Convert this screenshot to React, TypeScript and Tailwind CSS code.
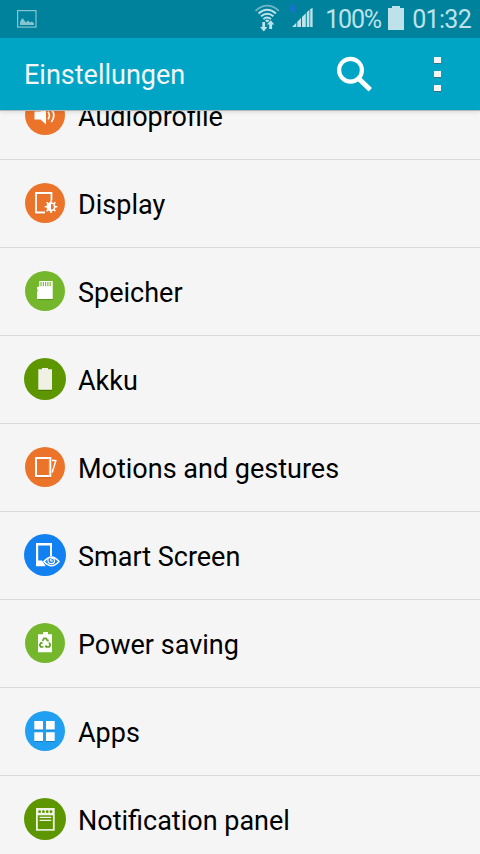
import type { ReactNode } from 'react';

type Setting = {
  label: string;
  color: string;
  radius: number;
  icon: ReactNode;
};

// Glyphs are drawn on a 42x42 box, centred on 21,21
const settings: Setting[] = [
  {
    label: 'Audioprofile',
    color: '#eb742a',
    radius: 20,
    icon: (
      <>
        <path d="M10.5 17.5h6l5.5-5v18l-5.5-5h-6z" fill="#fff" />
        <path d="M24 17.7q2.8 3.7 0 7.6M27.3 15q5 6.3 0 13" fill="none" stroke="#fff" strokeWidth="1.7" />
      </>
    ),
  },
  {
    label: 'Display',
    color: '#eb742a',
    radius: 20,
    icon: (
      <>
        <path d="M21 31.4h-9.1V11.4h15.8V19" fill="none" stroke="#b9602a" strokeOpacity=".6" strokeWidth="1.5" />
        <path d="M21 30.5h-9V11h15.5v7.5" fill="none" stroke="#fff" strokeWidth="1.8" />
        <circle cx="27" cy="24.7" r="3.7" fill="none" stroke="#fff" strokeWidth="1.6" />
        <path d="M27 20.6a4.1 4.1 0 0 0 0 8.2z" fill="#fff" />
        <path
          d="M27 20.8v-2.4M27 28.6V31M23.1 24.7h-2.4M30.9 24.7h2.4M24.2 21.9l-1.6-1.6M29.8 21.9l1.6-1.6M24.2 27.5l-1.6 1.6M29.8 27.5l1.6 1.6"
          stroke="#fff"
          strokeWidth="1.6"
        />
      </>
    ),
  },
  {
    label: 'Speicher',
    color: '#75b72c',
    radius: 20,
    icon: (
      <>
        <path d="M14 29.5h15" stroke="#5a9520" />
        <path d="M15.3 11H28.7v18H13v-7.5l1.2-.7-1.2-1.3v-2.3l2.3-1z" fill="#fff" />
        <path d="M17 12v4.3M19.3 12v4.3M21.6 12v4.3M23.9 12v4.3M26.2 12v4.3" stroke="#75b72c" strokeWidth="1.1" />
      </>
    ),
  },
  {
    label: 'Akku',
    color: '#5e9600',
    radius: 21,
    icon: (
      <>
        <path d="M14.3 32.2H28" stroke="#437000" />
        <path d="M18 10h6v1.3h4v20.4H14.3V11.3H18z" fill="#f0f1e4" />
      </>
    ),
  },
  {
    label: 'Motions and gestures',
    color: '#eb742a',
    radius: 20,
    icon: (
      <>
        <path d="M11 31.7h16.3" stroke="#b9602a" strokeOpacity=".7" />
        <rect x="12" y="12" width="14.3" height="18" fill="none" stroke="#fff" strokeWidth="2" />
        <path d="M25.3 12.5v18" stroke="#f6c19f" strokeWidth=".8" />
        <path d="M28 14.2l3.8.5-3.6 11.8" fill="none" stroke="#fff" strokeWidth="1.5" />
      </>
    ),
  },
  {
    label: 'Smart Screen',
    color: '#1180f0',
    radius: 21,
    icon: (
      <>
        <path d="M12 9h16v13h-2V11.4H14.2V26.5H18l1.5 2.2 2.3 3.6H12z" fill="#fff" />
        <path d="M20 27.5q7.5-8.8 15 0q-7.5 8.4-15 0z" fill="#1180f0" stroke="#fff" strokeWidth="1.6" />
        <path d="M24.1 25.1q-.9 4.8 3.4 4.6q3.2-.3 3-3.2q-.6-2.6-3.2-1.8q-1.5 1.1-.2 2.3q1 .4 1.5-.6" fill="none" stroke="#fff" strokeWidth="1.2" />
      </>
    ),
  },
  {
    label: 'Power saving',
    color: '#75b72c',
    radius: 20,
    icon: (
      <>
        <path d="M19 10h5v2.3h4v18H14v-18h5z" fill="#fff" />
        <path
          d="M18.5 19l1.5-2.6h2.1l1.5 2.4M25.1 20.5l1.2 2.4-1.1 1.9H22M19.4 24.8h-2.7l-1-1.8 1.6-2.6"
          fill="none"
          stroke="#69a52b"
          strokeWidth="1.8"
        />
        <path d="M24.7 17.2v2.5l-2.6-.8zM22.6 22.6v4l-2-2zM15.8 20.6l2.5-.9.5 2.5z" fill="#69a52b" />
      </>
    ),
  },
  {
    label: 'Apps',
    color: '#219ff0',
    radius: 20,
    icon: (
      <>
        <path d="M10.5 20h8.7M22.2 20h8.7M10.5 31.4h8.7M22.2 31.4h8.7" stroke="#167abc" />
        <path d="M10.3 11H19v8.6h-8.7zM22 11h8.7v8.6H22zM10.3 22.3H19V31h-8.7zM22 22.3h8.7V31H22z" fill="#fff" />
      </>
    ),
  },
  {
    label: 'Notification panel',
    color: '#5e9600',
    radius: 21,
    icon: (
      <>
        <rect x="12" y="10" width="18.7" height="22.7" fill="#f0f4e6" />
        <path d="M13.8 17.3h15.1v13.8H13.8z" fill="#5e9600" />
        <path d="M15.6 19.3h11.6M15.6 22.3h11.6" stroke="#f0f4e6" strokeWidth="1.2" />
        <g fill="#5e9600">
          <circle cx="15.6" cy="13.7" r="1.4" />
          <circle cx="19.4" cy="13.7" r="1.4" />
          <circle cx="23.2" cy="13.7" r="1.4" />
          <circle cx="27" cy="13.7" r="1.4" />
        </g>
      </>
    ),
  },
];

const StatusBar = () => (
  <div className="flex h-[38px] shrink-0 items-start bg-[#00829c] pl-[17px] pr-[9px] text-[#bde2ea]">
    {/* Screenshot notification */}
    <svg className="mt-[10px] h-[18px] w-5" viewBox="0 0 20 18">
      <rect x=".6" y=".6" width="18.4" height="16.5" fill="none" stroke="#85c5d1" strokeWidth="1.2" />
      <path d="M3 15v-3l2-3.5h1l2 3 1 1 2-2 2 2 2-1 2 2V15z" fill="#85c5d1" />
    </svg>
    <div className="flex-1" />

    {/* Wi-Fi with traffic arrows */}
    <svg className="mt-1 h-7 w-[26px]" viewBox="0 0 26 28">
      <g fill="none" stroke="currentColor">
        <path d="M1.5 6.8q11.8-10.2 23.4 0" stroke="#73b6c5" strokeWidth="1.7" />
        <path d="M4.5 9.4q8.8-7.4 17.4 0" strokeWidth="2" />
        <path d="M7 12.3q6.3-5 12.4 0" strokeWidth="2" />
        <path d="M9.4 15q3.8-3 7.6 0" strokeWidth="2" />
      </g>
      <path d="M13.2 18.4l-2.2-2q2.2-1.8 4.4 0z" fill="currentColor" />
      <path d="M8.3 18h2.8v5h2.3L9.8 27.4 6 23h2.3zM15.2 25v-4.6h-2.3l3.8-4.2 3.7 4.2h-2.3V25z" fill="currentColor" />
    </svg>

    {/* Roaming signal */}
    <svg className="ml-[9px] mt-1 h-6 w-[26px]" viewBox="0 0 26 24">
      <path d="M2.5 9V2h3.2v3H2.5M4.2 5.2l2 3.5M0 2.2h2.5M0 5.2h2.5" fill="none" stroke="#1e6fd8" strokeWidth="1.3" />
      <path
        d="M3 23l4.3-4.3V23zM8.3 17.7l3.7-3.7v9H8.3zM13 13l3.8-3.8V23H13zM17.8 8.3l2.6-2.6V23h-2.6zM21.2 5l2.4-1V23h-2.4z"
        fill="currentColor"
      />
    </svg>

    <span className="ml-[10px] mt-[6px] w-[58px] whitespace-nowrap text-[25px] leading-7 tracking-[-1.2px]">100%</span>
    <svg className="ml-[5px] mt-[6px] h-6 w-4" viewBox="0 0 16 24">
      <path d="M4 0h8v2h4v22H0V2h4z" fill="currentColor" />
    </svg>
    <span className="ml-[8px] mt-[6px] whitespace-nowrap text-[25px] leading-7 tracking-[-0.7px]">01:32</span>
  </div>
);

const ActionBar = () => (
  <header className="z-10 flex h-[72px] shrink-0 items-center bg-[#00a5c5] pl-6 pr-[39px] shadow-[0_1px_0_#aeb7b9,0_3px_3px_rgba(0,0,0,0.08)]">
    <h1 className="flex-1 pt-[2px] text-[27px] leading-8 text-[#f5f5f5]">Einstellungen</h1>
    <svg className="h-[36px] w-[36px]" viewBox="0 0 36 36" fill="none" stroke="#fff">
      <circle cx="14.5" cy="14.2" r="11.4" strokeWidth="4.2" />
      <path d="M22.3 22.3l12 11.5" strokeWidth="5" />
    </svg>
    <div className="ml-[62px] flex flex-col gap-2">
      {[0, 1, 2].map((dot) => (
        <span key={dot} className="h-[6px] w-[7px] bg-[#f5f5f5] shadow-[0_1px_0_#33727e]" />
      ))}
    </div>
  </header>
);

const SettingRow = ({ label, color, radius, icon }: Setting) => (
  <li className="flex h-[88px] shrink-0 items-start border-b border-[#d9d9d9] pl-6">
    <svg className="mt-[22px] h-[42px] w-[42px] shrink-0" viewBox="0 0 42 42">
      <circle cx="21" cy="21" r={radius} fill={color} />
      {icon}
    </svg>
    <span className="ml-3 mt-[29px] whitespace-nowrap text-[27px] leading-8 text-black">{label}</span>
  </li>
);

export default function App() {
  return (
    <div className="flex h-[854px] w-[480px] flex-col overflow-hidden bg-[#f5f5f5] font-['Roboto',sans-serif]">
      <StatusBar />
      <ActionBar />
      <main className="min-h-0 flex-1 overflow-hidden">
        {/* List is scrolled, the first row sits partly under the action bar */}
        <ul className="-mt-[38px] flex flex-col">
          {settings.map((setting) => (
            <SettingRow key={setting.label} {...setting} />
          ))}
        </ul>
      </main>
    </div>
  );
}
